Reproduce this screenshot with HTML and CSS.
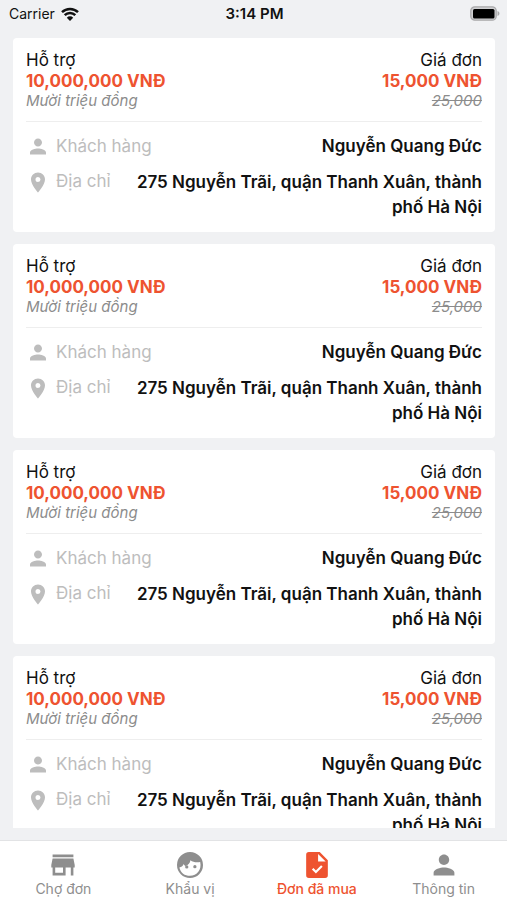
FILE: index.html
```html
<!DOCTYPE html>
<html lang="vi">
<head>
<meta charset="utf-8">
<meta name="viewport" content="width=device-width, initial-scale=1">
<title>Đơn đã mua</title>
<link rel="stylesheet" href="styles.css">
</head>
<body>
<svg class="sprite" aria-hidden="true">
  <symbol id="person" viewBox="0 0 24 24"><path d="M12 12c2.210 0 4-1.790 4-4s-1.790-4-4-4-4 1.790-4 4 1.790 4 4 4zm0 2c-2.670 0-8 1.340-8 4v2h16v-2c0-2.660-5.330-4-8-4z"/></symbol>
  <symbol id="pin" viewBox="0 0 24 24"><path d="M12 2C8.130 2 5 5.130 5 9c0 5.250 7 13 7 13s7-7.750 7-13c0-3.870-3.130-7-7-7zm0 9.500a2.500 2.500 0 1 1 0-5 2.500 2.500 0 0 1 0 5z"/></symbol>
</svg>
<div class="app">
  <header class="status">
    <div class="carrier">
      <span>Carrier</span>
      <svg class="wifi" viewBox="0 0 18 14" aria-hidden="true"><path d="M1 5.200a11.500 11.500 0 0 1 16 0M3.700 8.200a7.500 7.500 0 0 1 10.600 0" fill="none" stroke="currentColor" stroke-width="2.500"/><path d="M9 13.900 5.800 10.700a4.500 4.500 0 0 1 6.400 0z"/></svg>
    </div>
    <strong class="clock">3:14 PM</strong>
    <div class="power">
      <svg class="battery" viewBox="0 0 30 15" aria-hidden="true"><rect x=".8" y=".8" width="25.400" height="13.400" rx="4" fill="#d0d0d2" stroke="#a9a9ab" stroke-width="1.300"/><rect x="3" y="3" width="21.500" height="9.500" rx="1.500" fill="#000"/><path d="M27.500 5c2.600 1 2.600 4 0 5z" fill="#a9a9ab"/></svg>
    </div>
  </header>

  <main class="orders">
    <article class="card">
      <div class="summary">
        <div class="amount"><span class="label">Hỗ trợ</span><strong class="value">10,000,000 VNĐ</strong><em class="note">Mười triệu đồng</em></div>
        <div class="amount price"><span class="label">Giá đơn</span><strong class="value">15,000 VNĐ</strong><s class="note">25,000</s></div>
      </div>
      <dl class="details">
        <div class="detail"><dt><svg class="icon"><use href="#person"/></svg>Khách hàng</dt><dd>Nguyễn Quang Đức</dd></div>
        <div class="detail address"><dt><svg class="icon"><use href="#pin"/></svg>Địa chỉ</dt><dd>275 Nguyễn Trãi, quận Thanh Xuân, thành phố Hà Nội</dd></div>
      </dl>
    </article>
    <article class="card">
      <div class="summary">
        <div class="amount"><span class="label">Hỗ trợ</span><strong class="value">10,000,000 VNĐ</strong><em class="note">Mười triệu đồng</em></div>
        <div class="amount price"><span class="label">Giá đơn</span><strong class="value">15,000 VNĐ</strong><s class="note">25,000</s></div>
      </div>
      <dl class="details">
        <div class="detail"><dt><svg class="icon"><use href="#person"/></svg>Khách hàng</dt><dd>Nguyễn Quang Đức</dd></div>
        <div class="detail address"><dt><svg class="icon"><use href="#pin"/></svg>Địa chỉ</dt><dd>275 Nguyễn Trãi, quận Thanh Xuân, thành phố Hà Nội</dd></div>
      </dl>
    </article>
    <article class="card">
      <div class="summary">
        <div class="amount"><span class="label">Hỗ trợ</span><strong class="value">10,000,000 VNĐ</strong><em class="note">Mười triệu đồng</em></div>
        <div class="amount price"><span class="label">Giá đơn</span><strong class="value">15,000 VNĐ</strong><s class="note">25,000</s></div>
      </div>
      <dl class="details">
        <div class="detail"><dt><svg class="icon"><use href="#person"/></svg>Khách hàng</dt><dd>Nguyễn Quang Đức</dd></div>
        <div class="detail address"><dt><svg class="icon"><use href="#pin"/></svg>Địa chỉ</dt><dd>275 Nguyễn Trãi, quận Thanh Xuân, thành phố Hà Nội</dd></div>
      </dl>
    </article>
    <article class="card">
      <div class="summary">
        <div class="amount"><span class="label">Hỗ trợ</span><strong class="value">10,000,000 VNĐ</strong><em class="note">Mười triệu đồng</em></div>
        <div class="amount price"><span class="label">Giá đơn</span><strong class="value">15,000 VNĐ</strong><s class="note">25,000</s></div>
      </div>
      <dl class="details">
        <div class="detail"><dt><svg class="icon"><use href="#person"/></svg>Khách hàng</dt><dd>Nguyễn Quang Đức</dd></div>
        <div class="detail address"><dt><svg class="icon"><use href="#pin"/></svg>Địa chỉ</dt><dd>275 Nguyễn Trãi, quận Thanh Xuân, thành phố Hà Nội</dd></div>
      </dl>
    </article>
  </main>

  <nav class="tabs">
    <a class="tab" href="#market"><svg class="tab-icon" viewBox="2 2 20 20"><path d="M20 4H4v2h16V4zm1 10v-2l-1-5H4l-1 5v2h1v6h10v-6h4v6h2v-6h1zm-9 4H6v-4h6v4z"/></svg>Chợ đơn</a>
    <a class="tab" href="#taste"><svg class="tab-icon" viewBox="0 0 24 24"><path fill-rule="evenodd" d="M12 0a12 12 0 1 0 0 24 12 12 0 0 0 0-24zM2.200 14.200c1.800-.3 3-1.200 4-3.200.4 1 .9 1.500 1.800 2 2.500-1.200 4-2.900 4.400-5.500 2.400 1.700 5 2.300 9 1.700 1.600 7.200-3 12.800-9.400 12.800-4.900 0-8.800-3-9.800-7.800z"/><circle cx="9" cy="13.800" r="1.500"/><circle cx="16.500" cy="13.500" r="1.500"/></svg>Khẩu vị</a>
    <a class="tab active" href="#bought" aria-current="page"><svg class="tab-icon" viewBox="0 0 24 24"><path fill-rule="evenodd" d="M4.500 0h10L22 7.500v14a2.500 2.500 0 0 1-2.500 2.500h-15A2.500 2.500 0 0 1 2 21.500v-19A2.500 2.500 0 0 1 4.500 0zM13 1.800v7h7z"/><path d="m8 15.500 3 3 5.500-5.500" fill="none" stroke="#fff" stroke-width="2"/></svg>Đơn đã mua</a>
    <a class="tab" href="#profile"><svg class="tab-icon" viewBox="2 2 20 20"><use href="#person" width="24" height="24"/></svg>Thông tin</a>
  </nav>
</div>
</body>
</html>
```
FILE: styles.css
```css
* {
  box-sizing: border-box;
}

body {
  margin: 0;
  background: #f0f1f3;
  color: #111;
  font-family: Inter, "Liberation Sans", sans-serif;
  font-size: 17px;
}

svg {
  fill: currentColor;
}

.sprite {
  display: none;
}

.app {
  display: flex;
  flex-direction: column;
  height: 100vh;
}

.status {
  display: grid;
  grid-template-columns: 1fr auto 1fr;
  align-items: center;
  flex: none;
  height: 38px;
  padding: 0 7px 11px 9px;
  font-size: 14px;
}

.carrier {
  display: flex;
  align-items: center;
  gap: 6px;
}

.wifi {
  width: 18px;
  height: 14px;
}

.clock {
  font-size: 15px;
  font-weight: 600;
}

.power {
  display: flex;
  justify-content: flex-end;
}

.battery {
  width: 30px;
  height: 15px;
}

.orders {
  display: flex;
  flex: 1;
  flex-direction: column;
  gap: 12px;
  min-height: 0;
  margin: 0 12px 12px 13px;
  overflow: hidden;
}

.card {
  flex: none;
  padding: 12px 13px;
  border-radius: 4px;
  background: #fff;
}

.summary {
  display: flex;
  justify-content: space-between;
  padding-bottom: 11px;
  border-bottom: 1px solid #eee;
}

.amount {
  display: flex;
  flex-direction: column;
}

.price {
  align-items: flex-end;
}

.label {
  line-height: 20px;
}

.value {
  color: #ee5330;
  font-weight: 700;
  line-height: 22px;
}

.note {
  color: #8c8c8c;
  font-size: 15px;
  font-style: italic;
  line-height: 18px;
}

.details {
  display: flex;
  flex-direction: column;
  gap: 11px;
  margin: 12px 0 0;
  line-height: 25px;
}

.detail {
  display: flex;
  justify-content: space-between;
  gap: 24px;
}

dt {
  display: flex;
  align-self: flex-start;
  flex: none;
  gap: 6px;
  color: #bdbdbd;
}

.address dt {
  line-height: 22px;
}

dd {
  margin: 0;
  font-weight: 600;
  text-align: right;
}

.icon {
  width: 24px;
  height: 25px;
}

.tabs {
  display: grid;
  grid-template-columns: repeat(4, 1fr);
  flex: none;
  height: 60px;
  border-top: 1px solid #e2e3e5;
  background: #fff;
}

.tab {
  display: flex;
  flex-direction: column;
  align-items: center;
  gap: 1px;
  padding-top: 11px;
  color: #8e8e8e;
  font-size: 14px;
  line-height: 20px;
  text-decoration: none;
}

.tab-icon {
  width: 26px;
  height: 26px;
}

.active {
  color: #ee5330;
  font-weight: 500;
}
```
